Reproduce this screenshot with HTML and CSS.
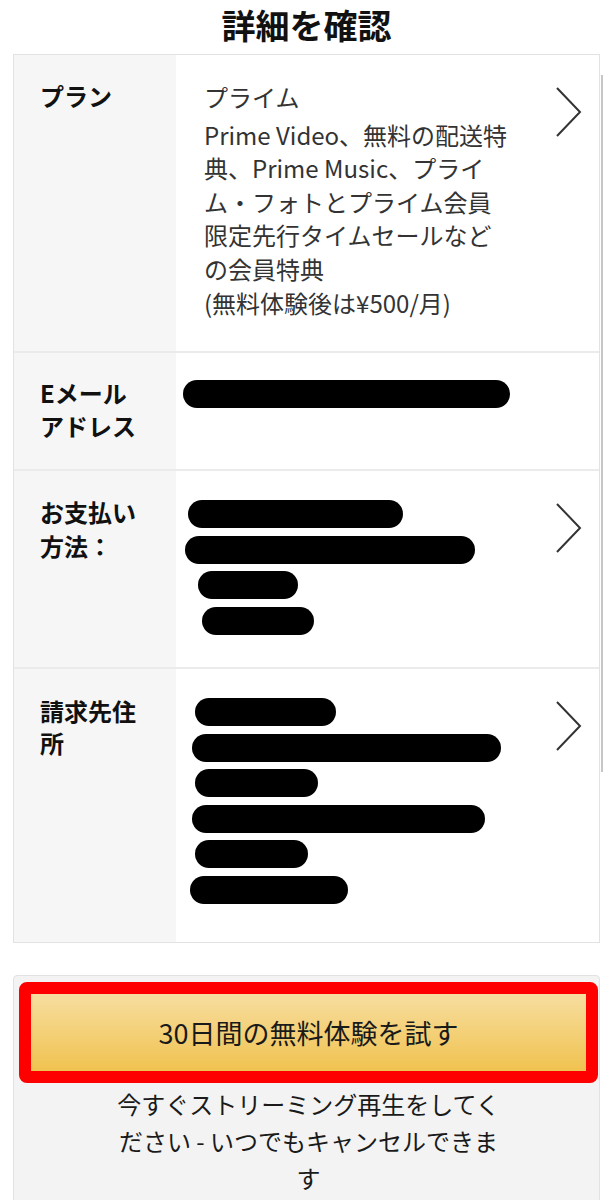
FILE: index.html
```html
<!DOCTYPE html>
<html lang="ja">
<head>
<meta charset="utf-8">
<title>詳細を確認</title>
<link rel="stylesheet" href="styles.css">
</head>
<body>
<div class="scroll-indicator"></div>
<main class="page">
  <h1 class="title">詳細を確認</h1>

  <section class="details">
    <div class="row row-plan">
      <div class="label">プラン</div>
      <div class="value">
        <div class="plan-name">プライム</div>
        <p class="plan-desc">Prime Video、無料の配送特<br>典、Prime Music、プライ<br>ム・フォトとプライム会員<br>限定先行タイムセールなど<br>の会員特典</p>
        <p class="plan-price">(無料体験後は¥500/月)</p>
      </div>
      <div class="chev"><svg width="27" height="50" viewBox="0 0 27 50"><polyline points="2,1 25,25 2,49" fill="none" stroke="#333" stroke-width="2"/></svg></div>
    </div>

    <div class="row row-email">
      <div class="label">Eメール<br>アドレス</div>
      <div class="value value-redacted value-email">
        <div class="bar" style="margin-left:7px;width:327px"></div>
      </div>
      <div class="chev"></div>
    </div>

    <div class="row row-pay">
      <div class="label">お支払い<br>方法：</div>
      <div class="value value-redacted">
        <div class="bar" style="margin-left:12px;width:215px"></div>
        <div class="bar" style="margin-left:9px;width:290px"></div>
        <div class="bar" style="margin-left:22px;width:100px"></div>
        <div class="bar" style="margin-left:26px;width:112px"></div>
      </div>
      <div class="chev"><svg width="27" height="50" viewBox="0 0 27 50"><polyline points="2,1 25,25 2,49" fill="none" stroke="#333" stroke-width="2"/></svg></div>
    </div>

    <div class="row row-address">
      <div class="label">請求先住<br>所</div>
      <div class="value value-redacted">
        <div class="bar" style="margin-left:19px;width:141px"></div>
        <div class="bar" style="margin-left:16px;width:309px"></div>
        <div class="bar" style="margin-left:19px;width:123px"></div>
        <div class="bar" style="margin-left:16px;width:293px"></div>
        <div class="bar" style="margin-left:19px;width:113px"></div>
        <div class="bar" style="margin-left:14px;width:158px"></div>
      </div>
      <div class="chev"><svg width="27" height="50" viewBox="0 0 27 50"><polyline points="2,1 25,25 2,49" fill="none" stroke="#333" stroke-width="2"/></svg></div>
    </div>
  </section>

  <section class="cta">
    <div class="highlight">
      <button class="btn" type="button">30日間の無料体験を試す</button>
    </div>
    <p class="cta-note">今すぐストリーミング再生をしてく<br>ださい - いつでもキャンセルできま<br>す</p>
  </section>
</main>
</body>
</html>
```

FILE: styles.css
```css
* { box-sizing: border-box; }

html, body {
  margin: 0;
  padding: 0;
  background: #ffffff;
}

body {
  font-family: "Noto Sans CJK JP", "Noto Sans", sans-serif;
  color: #111;
  position: relative;
}

.scroll-indicator {
  position: absolute;
  left: 601px;
  top: 75px;
  width: 2px;
  height: 697px;
  background: #c6c6c6;
}

.page {
  margin: 0 4px 0 13px;
}

.title {
  margin: 5px 0 9px;
  font-size: 34px;
  line-height: 40px;
  font-weight: 700;
  text-align: center;
  color: #111;
}

.details {
  border: 1px solid #e2e2e2;
}

.row {
  display: grid;
  grid-template-columns: 162px 1fr 44px;
  border-top: 2px solid #ebebeb;
}

.row-plan { border-top: 0; min-height: 296px; }
.row-email { min-height: 118px; }
.row-pay { min-height: 198px; }
.row-address { min-height: 275px; }

.label {
  background: #f6f6f6;
  padding: 24px 0 0 26px;
  font-size: 24px;
  line-height: 34px;
  font-weight: 700;
  color: #111;
}

.row-email .label { padding-top: 23px; line-height: 33px; }
.row-address .label { padding-top: 26px; line-height: 32px; }

.value {
  background: #fff;
  padding: 25px 0 0 28px;
  color: #333;
  font-size: 24px;
}

.plan-name {
  line-height: 34px;
  margin-bottom: 4px;
}

.plan-desc {
  margin: 0;
  line-height: 33.4px;
}

.plan-price {
  margin: 1px 0 0;
  line-height: 34px;
}

.value-redacted {
  padding: 29px 0 0 0;
  display: flex;
  flex-direction: column;
  gap: 7.6px;
}

.value-email { padding-top: 27px; }

.bar {
  height: 28px;
  background: #000;
  border-radius: 14px;
}

.chev {
  background: #fff;
  padding-top: 32px;
}

.chev svg { display: block; }

.cta {
  margin-top: 32px;
  background: #f3f3f3;
  border: 1px solid #e2e2e2;
  border-radius: 4px;
  padding: 6px 1px 40px 5px;
}

.highlight {
  border: 12px solid #ff0000;
  border-radius: 8px;
}

.btn {
  display: flex;
  align-items: center;
  justify-content: center;
  width: 100%;
  height: 77px;
  border: 0;
  margin: 0;
  padding: 0;
  background: linear-gradient(to bottom, #f7dea0, #f0c24f);
  font-family: "Noto Sans CJK JP", "Noto Sans", sans-serif;
  font-size: 27px;
  color: #1a1a1a;
}

.cta-note {
  margin: 2px 0 0;
  font-size: 24px;
  line-height: 37px;
  text-align: center;
  color: #1a1a1a;
}
```
